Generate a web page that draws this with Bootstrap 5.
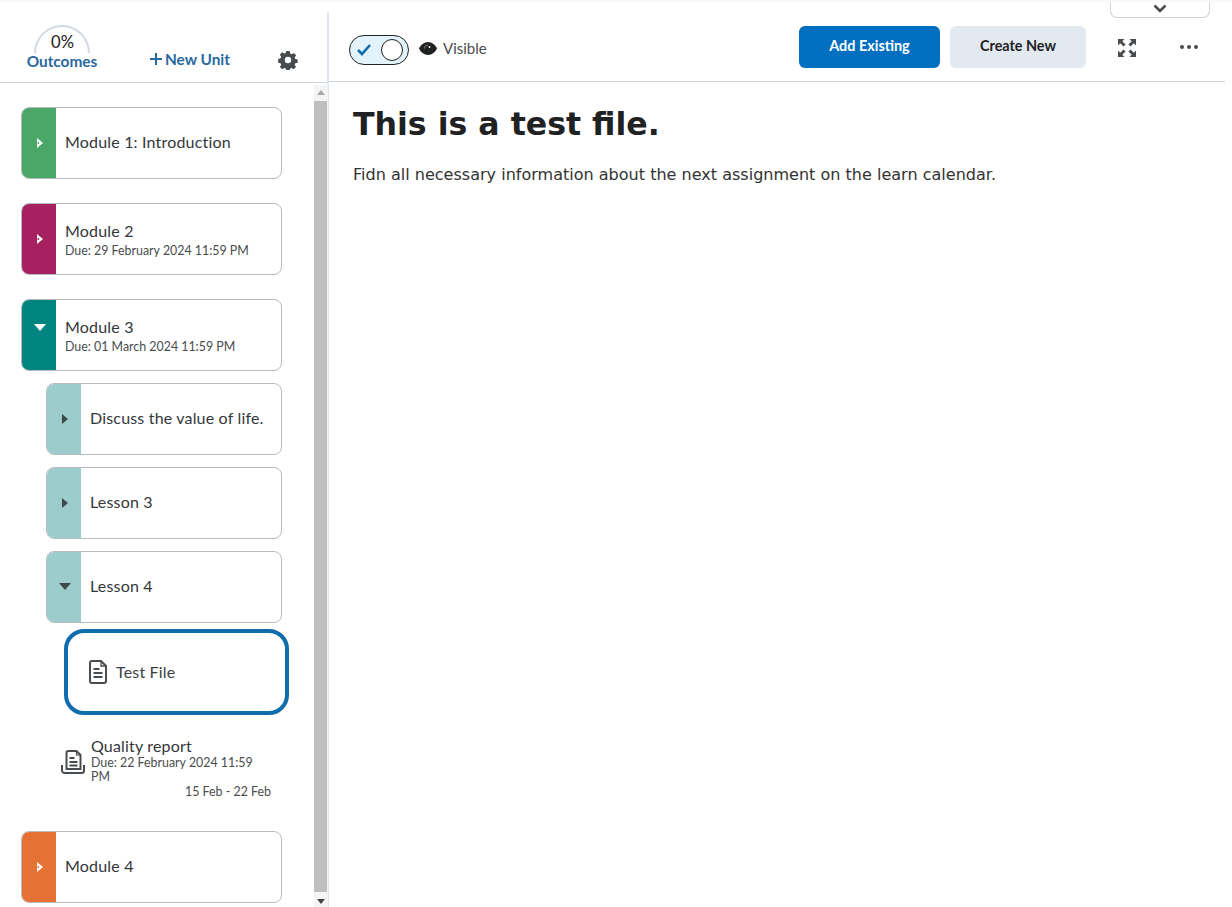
<!DOCTYPE html>
<html lang="en">
<head>
<meta charset="utf-8">
<title>Test File</title>
<link rel="stylesheet" href="https://cdn.jsdelivr.net/npm/bootstrap@5.3.0/dist/css/bootstrap.min.css">
<style>
html,body{height:100%;overflow:hidden;background:#fff}
body{font-family:"Lato",sans-serif;color:#202122;border-top:2px solid #f7f8f9;position:relative}
.shell{height:905px}
.side{width:327px;flex:none;position:relative}
.divider{width:2px;flex:none;background:#dfe6ef;margin-top:10px}
.side-head{height:81px;border-bottom:1px solid #cdd5dc;position:relative}
.outcome{position:absolute;left:26px;top:22px;width:72px;text-align:center}
.arc{position:absolute;left:8px;top:1px;width:56px;height:28px;border:2px solid #d3d9e3;border-bottom:0;border-radius:28px 28px 0 0}
.pct{font-size:16.6px;line-height:18px;padding:9px 0 0 1px;color:#202122;position:relative}
.olink{font-size:15.4px;font-weight:700;color:#29699e;line-height:20px}
.newunit{position:absolute;left:149px;top:47px;font-size:15.4px;font-weight:700;color:#29699e;line-height:20px;display:flex;align-items:center;gap:2px}
.gear{position:absolute;left:278px;top:48px}
.tree{padding:24px 0 0 21px;width:314px}
.unit{height:72px;width:261px;border:1px solid #b7bcc0;border-radius:8px;display:flex;overflow:hidden;background:#fff;margin-bottom:24px}
.unit.sub{width:236px;margin-left:25px;margin-bottom:12px}
.unit.open{margin-bottom:12px}
.tab{width:34px;flex:none;display:flex;align-items:center;justify-content:center;padding-left:2px}
.utext{padding-left:9px;align-self:center;font-size:16px;letter-spacing:.18px;line-height:20px;color:#34373a;margin-top:-3px}
.utext.two{margin-top:2px}
.utext.two .due{margin-top:1px}
.due{font-size:12.4px;letter-spacing:0;line-height:18px;color:#494c4e}
.c1{background:#4ba766}.c2{background:#a6215f}.c3{background:#00847f}.c4{background:#9ccccb}.c5{background:#e57234}
.current{width:225px;height:86px;margin:-6px 0 0 43px;border:4px solid #0f6cad;border-radius:20px;display:flex;align-items:center;padding-left:21px;gap:9px;font-size:16px;letter-spacing:.18px;color:#3c3f42}
.report{position:relative;height:116px;margin-left:39px}
.rtext{position:absolute;left:31px;top:21px;width:172px;font-size:16px;letter-spacing:.18px;line-height:20px;color:#34373a}
.rtext .due{line-height:14px;margin-top:0}
.rdates{position:absolute;left:0;top:70px;text-align:right;font-size:12.4px;line-height:14px;color:#494c4e;width:211px}
.ricon{position:absolute;left:1px;top:35px}
.sbar{position:absolute;left:314px;top:83px;width:14px;height:823px;background:#f4f4f4}
.thumb{position:absolute;left:0;top:16px;bottom:16px;width:13px;background:#bfbfbf}
.sbar svg{position:absolute;left:3px}
.main{flex:1;min-width:0}
.main-head{height:80px;border-bottom:1px solid #cdd5dc;margin-right:7px;position:relative;display:flex;align-items:center;padding-left:20px}
.toggle{width:60px;height:30px;border:1px solid #202122;border-radius:15px;background:#e3f3fc;display:flex;align-items:center;justify-content:space-between;padding:0 5px 0 6px;box-sizing:border-box;margin-top:16px}
.knob{width:22px;height:22px;border-radius:50%;border:1px solid #202122;background:#fff}
.vis{font-size:15px;color:#494c4e;margin-left:10px;display:flex;align-items:center;gap:6px;margin-top:14px}
.btn-add,.btn-new{height:42px;border:0;border-radius:6px;font-family:"Lato",sans-serif;font-size:14.4px;font-weight:700;padding:0 0 2px;position:absolute;top:24px}
.btn-add{left:470px;width:141px;background:#006fbf;color:#fff}
.btn-new{left:621px;width:136px;background:#e3e9f1;color:#202122}
.fs{position:absolute;left:788px;top:36px}
.more{position:absolute;left:850px;top:42px}
.drawer{position:absolute;left:781px;top:-4px;width:100px;height:20px;border:1px solid #cdd5dc;border-top:0;border-radius:0 0 7px 7px;background:#fff;display:flex;align-items:center;justify-content:center;padding-top:2px}
.article{padding:23px 0 0 24px;font-family:"DejaVu Sans",Verdana,sans-serif}
.article h1{font-family:"DejaVu Sans",Verdana,sans-serif;font-size:31.6px;font-weight:700;line-height:38px;margin:0 0 22px;color:#202122}
.article p{font-size:16.05px;line-height:20px;margin:0;color:#333}
</style>
</head>
<body>
<div class="shell d-flex">
  <aside class="side">
    <div class="side-head">
      <div class="outcome">
        <div class="arc"></div>
        <div class="pct">0%</div>
        <div class="olink">Outcomes</div>
      </div>
      <div class="newunit"><svg width="14" height="14" viewBox="0 0 14 14"><path d="M7 1v12M1 7h12" stroke="#29699e" stroke-width="2"/></svg>New Unit</div>
      <svg class="gear" width="20" height="20" viewBox="0 0 20 20"><path fill="#494c4e" fill-rule="evenodd" d="M8.300 1h3.400l.5 2.500 1.500.7 2.200-1.300 2.200 2.400-1.400 2.100.6 1.500 2.400.6v3.200l-2.400.6-.6 1.500 1.300 2.100-2.300 2.300-2.100-1.300-1.500.6-.5 2.400H8.300l-.5-2.400-1.500-.6-2.100 1.300-2.300-2.300 1.300-2.100-.6-1.500-2.400-.6V8.900l2.400-.6.6-1.500-1.400-2.100 2.200-2.400 2.200 1.300 1.500-.7zM10 6.800a3.200 3.200 0 1 0 0 6.400 3.200 3.200 0 0 0 0-6.400z"/></svg>
    </div>
    <div class="tree">
      <div class="unit"><div class="tab c1"><svg width="8" height="10" viewBox="0 0 8 10"><path d="M1 0l6 5-6 5z" fill="#fff"/><circle cx="2.300" cy="5" r="1" fill="#4ba766"/></svg></div><div class="utext">Module 1: Introduction</div></div>
      <div class="unit"><div class="tab c2"><svg width="8" height="10" viewBox="0 0 8 10"><path d="M1 0l6 5-6 5z" fill="#fff"/><circle cx="2.300" cy="5" r="1" fill="#a6215f"/></svg></div><div class="utext two">Module 2<div class="due">Due: 29 February 2024 11:59 PM</div></div></div>
      <div class="unit open"><div class="tab c3 align-items-start"><svg class="mt-4" width="12" height="8" viewBox="0 0 12 8"><path d="M0 0h12L6 7z" fill="#fff"/></svg></div><div class="utext two">Module 3<div class="due">Due: 01 March 2024 11:59 PM</div></div></div>
      <div class="unit sub"><div class="tab c4"><svg width="8" height="10" viewBox="0 0 8 10"><path d="M1 0l6 5-6 5z" fill="#3c4a4c"/></svg></div><div class="utext">Discuss the value of life.</div></div>
      <div class="unit sub"><div class="tab c4"><svg width="8" height="10" viewBox="0 0 8 10"><path d="M1 0l6 5-6 5z" fill="#3c4a4c"/></svg></div><div class="utext">Lesson 3</div></div>
      <div class="unit sub"><div class="tab c4"><svg width="12" height="8" viewBox="0 0 12 8"><path d="M0 0h12L6 7z" fill="#3c4a4c"/></svg></div><div class="utext">Lesson 4</div></div>
      <div class="current">
        <svg width="18" height="24" viewBox="0 0 18 24" fill="none" stroke="#494c4e" stroke-width="2"><path d="M3 1h9l5 5v15a2 2 0 0 1-2 2H3a2 2 0 0 1-2-2V3a2 2 0 0 1 2-2z"/><path d="M12 1v5h5" stroke-width="1.300"/><path d="M4.500 9h6M4.500 13h9M4.500 17h9" stroke-width="1.800"/></svg>
        <span>Test File</span>
      </div>
      <div class="report">
        <svg class="ricon" width="24" height="24" viewBox="0 0 24 24" fill="none" stroke="#494c4e" stroke-width="2"><path d="M5.500 19V3a2 2 0 0 1 2-2h8l4 4v14z"/><path d="M15.500 1v4h4" stroke-width="1.200"/><path d="M8.500 8h5M8.500 12h8M8.500 15.500h8" stroke-width="1.800"/><path d="M1 15v5.500A2.500 2.500 0 0 0 3.500 23h17a2.500 2.500 0 0 0 2.500-2.500V15"/></svg>
        <div class="rtext">Quality report<div class="due">Due: 22 February 2024 11:59 PM</div></div>
        <div class="rdates">15 Feb - 22 Feb</div>
      </div>
      <div class="unit"><div class="tab c5"><svg width="8" height="10" viewBox="0 0 8 10"><path d="M1 0l6 5-6 5z" fill="#fff"/><circle cx="2.300" cy="5" r="1" fill="#e57234"/></svg></div><div class="utext">Module 4</div></div>
    </div>
    <div class="sbar">
      <svg style="top:5px" width="8" height="5" viewBox="0 0 8 5"><path d="M0 5 4 0l4 5z" fill="#a8a8a8"/></svg>
      <div class="thumb"></div>
      <svg style="bottom:4px" width="8" height="5" viewBox="0 0 8 5"><path d="M0 0l4 5 4-5z" fill="#444"/></svg>
    </div>
  </aside>
  <div class="divider"></div>
  <main class="main">
    <div class="main-head">
      <div class="toggle"><svg width="16" height="13" viewBox="0 0 16 13"><path d="M2 7l4 4 8-9" fill="none" stroke="#0f6cad" stroke-width="2.600"/></svg><div class="knob"></div></div>
      <div class="vis"><svg width="18" height="13" viewBox="0 0 18 13"><path fill="#202122" d="M9 0c4 0 7.500 3 9 6.500C16.500 10 13 13 9 13S1.500 10 0 6.500C1.500 3 5 0 9 0z"/><path d="M5.500 6.500A3.500 3.500 0 0 1 9 3" fill="none" stroke="#fff" stroke-width=".7" opacity=".6"/><circle cx="10.500" cy="5" r=".9" fill="#fff"/></svg>Visible</div>
      <button class="btn-add" type="button">Add Existing</button>
      <button class="btn-new" type="button">Create New</button>
      <svg class="fs" width="20" height="20" viewBox="0 0 20 20" fill="#494c4e"><path d="M1 1h6.500L5.300 3.200 8.600 6.500 6.500 8.600 3.200 5.300 1 7.500zM19 1v6.500l-2.200-2.200-3.300 3.300-2.100-2.100 3.300-3.300L12.500 1zM1 19v-6.500l2.200 2.200 3.300-3.300 2.100 2.100-3.300 3.300L7.500 19zM19 19h-6.500l2.200-2.200-3.300-3.300 2.100-2.100 3.300 3.300 2.200-2.200z"/></svg>
      <svg class="more" width="20" height="6" viewBox="0 0 20 6" fill="#494c4e"><circle cx="3" cy="3" r="2"/><circle cx="10" cy="3" r="2"/><circle cx="17" cy="3" r="2"/></svg>
      <div class="drawer"><svg width="14" height="9" viewBox="0 0 14 9"><path d="M1.500 1.500 7 7l5.500-5.500" fill="none" stroke="#494c4e" stroke-width="2.600"/></svg></div>
    </div>
    <div class="article">
      <h1>This is a test file.</h1>
      <p>Fidn all necessary information about the next assignment on the learn calendar.</p>
    </div>
  </main>
</div>
</body>
</html>
